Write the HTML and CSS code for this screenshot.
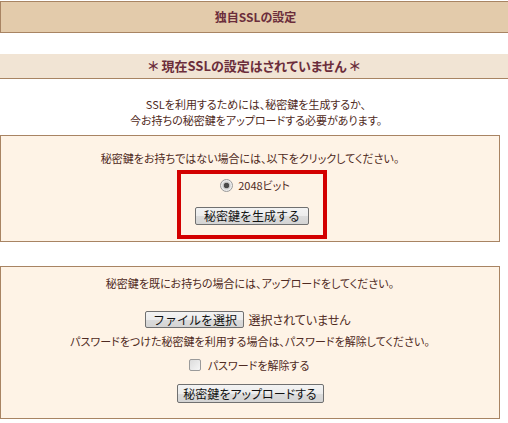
FILE: index.html
```html
<!DOCTYPE html>
<html lang="ja">
<head>
<meta charset="utf-8">
<link rel="stylesheet" href="styles.css">
</head>
<body>
<div class="title">独自SSLの設定</div>
<div class="status">＊ 現在SSLの設定はされていません ＊</div>
<p class="intro">SSLを利用するためには、秘密鍵を生成するか、<br>今お持ちの秘密鍵をアップロードする必要があります。</p>

<div class="box box-gen">
  <p class="line">秘密鍵をお持ちではない場合には、以下をクリックしてください。</p>
  <div class="highlight">
    <label class="radio-row"><span class="radio"></span>2048ビット</label>
    <button class="btn btn-gen">秘密鍵を生成する</button>
  </div>
</div>

<div class="box box-up">
  <p class="line">秘密鍵を既にお持ちの場合には、アップロードをしてください。</p>
  <div class="file-row"><button class="btn btn-file">ファイルを選択</button><span class="file-name">選択されていません</span></div>
  <p class="line line-pw">パスワードをつけた秘密鍵を利用する場合は、パスワードを解除してください。</p>
  <label class="check-row"><span class="check"></span>パスワードを解除する</label>
  <button class="btn btn-up">秘密鍵をアップロードする</button>
</div>
</body>
</html>
```

FILE: styles.css
```css
html, body {
  margin: 0;
  padding: 0;
  background: #ffffff;
  overflow: hidden;
}
body {
  width: 508px;
  font-family: "Noto Sans CJK JP", "Noto Sans", sans-serif;
  font-feature-settings: "palt";
  color: #4f2a22;
  font-size: 11px;
}
.title {
  margin-top: 1px;
  height: 30px;
  line-height: 30px;
  border: 1px solid #a88463;
  border-right: none;
  background: #e3cbab;
  color: #6b2d3b;
  font-weight: bold;
  font-size: 12px;
  text-align: center;
  padding-left: 2px;
}
.status {
  margin-top: 21px;
  height: 24px;
  line-height: 24px;
  background: #f1e4d4;
  border-bottom: 1px solid #a88463;
  color: #6b2d3b;
  font-weight: bold;
  font-size: 13px;
  text-align: center;
}
.intro {
  margin: 17px 0 0;
  line-height: 16px;
  font-size: 11px;
  text-align: center;
  padding-left: 4px;
  height: 32px;
}
.box {
  width: 498px;
  border: 1px solid #a88463;
  background: #fef3e6;
  display: flex;
  flex-direction: column;
  align-items: center;
}
.line {
  margin: 0;
  line-height: 14px;
  font-size: 11px;
}
.box-gen {
  margin-top: 7px;
  padding: 15px 0 2px;
}
.highlight {
  margin-top: 5px;
  width: 142px;
  border: 4px solid #d30000;
  padding: 4px 0 10px;
  display: flex;
  flex-direction: column;
  align-items: center;
  margin-left: 4px;
}
.radio-row {
  display: flex;
  align-items: center;
  gap: 5px;
  height: 14px;
  font-size: 11px;
  margin-left: 6px;
}
.radio {
  width: 11px;
  height: 11px;
  border-radius: 50%;
  border: 1px solid #9a9a9a;
  background: radial-gradient(circle, #4a4a4a 0 2.5px, #bdbdbd 3px, #e8e8e8 4.5px, #f4f4f4 6px);
  box-sizing: content-box;
}
.btn {
  font-family: "Noto Sans CJK JP", "Noto Sans", sans-serif;
  font-feature-settings: normal;
  color: #111;
  border: 1px solid #707070;
  border-radius: 2px;
  background: linear-gradient(#f3f3f3, #ececec 50%, #dcdcdc 51%, #d4d4d4);
  padding: 0;
  margin: 0;
  font-size: 12px;
  line-height: 14px;
}
.btn-gen {
  margin-top: 15px;
  width: 114px;
  height: 18px;
}
.box-up {
  margin-top: 24px;
  padding: 9px 0 15px;
}
.file-row {
  margin-top: 21px;
  display: flex;
  align-items: center;
  gap: 4px;
  margin-right: 4px;
}
.btn-file {
  width: 99px;
  height: 17px;
}
.file-name {
  font-size: 12px;
  line-height: 17px;
}
.line-pw {
  margin-top: 6px;
}
.check-row {
  margin-top: 10px;
  display: flex;
  align-items: center;
  gap: 7px;
  height: 14px;
  font-size: 11px;
  margin-right: 2px;
}
.check {
  width: 10px;
  height: 10px;
  border: 1px solid #9a9a9a;
  border-radius: 2px;
  background: linear-gradient(135deg, #dcdcdc, #f6f6f6);
}
.btn-up {
  margin-top: 12px;
  width: 147px;
  height: 19px;
  font-feature-settings: "palt";
}
```
